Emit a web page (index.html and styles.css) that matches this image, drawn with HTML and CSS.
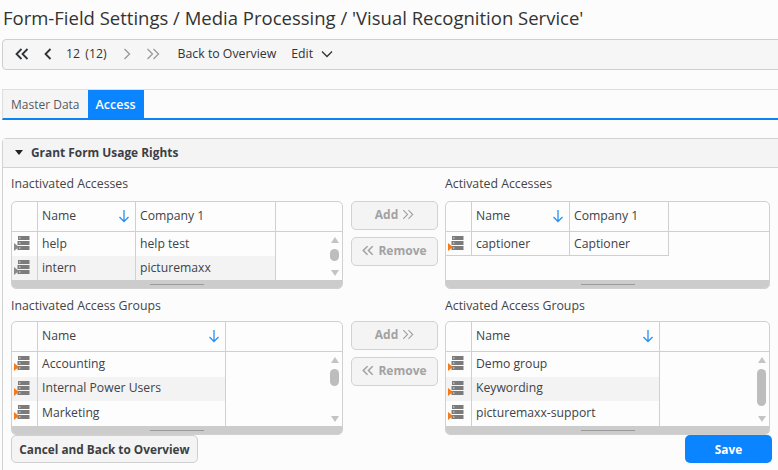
FILE: index.html
```html
<!DOCTYPE html>
<html lang="en">
<head>
<meta charset="utf-8">
<title>Form-Field Settings</title>
<link rel="stylesheet" href="styles.css">
</head>
<body>
<svg class="defs" width="0" height="0" aria-hidden="true">
  <symbol id="srv" viewBox="0 0 16 16">
    <path fill="#7b7b7b" d="M4 1h11.500v4H4zM3.500 6h12v4h-12zM3.500 11h12v4h-12z"/>
    <path fill="#e4e4e4" d="M5 2.500h1.500v1H5zM5 7.500h1.500v1H5zM5 12.500h1.500v1H5z"/>
  </symbol>
  <symbol id="dbl-l" viewBox="0 0 14 12"><path fill="none" stroke="currentColor" stroke-width="1.800" d="M6.500 1 1.500 6l5 5M12.500 1l-5 5 5 5"/></symbol>
  <symbol id="dbl-r" viewBox="0 0 14 12"><path fill="none" stroke="currentColor" stroke-width="1.300" d="M1.500 1l5 5-5 5M7.500 1l5 5-5 5"/></symbol>
  <symbol id="arrow" viewBox="0 0 12 14"><path fill="none" stroke="#2b8fee" stroke-width="1.300" d="M6 1v11.500M1.500 8 6 12.500 10.500 8"/></symbol>
</svg>

<h1 class="title">Form-Field Settings / Media Processing / 'Visual Recognition Service'</h1>

<nav class="toolbar">
  <svg class="nav-ico bold"><use href="#dbl-l"/></svg>
  <svg class="nav-ico single" viewBox="0 0 8 12"><path fill="none" stroke="currentColor" stroke-width="1.800" d="M6.500 1 1.500 6l5 5"/></svg>
  <span class="pager">12 (12)</span>
  <svg class="nav-ico single off" viewBox="0 0 8 12"><path fill="none" stroke="currentColor" stroke-width="1.400" d="M1.500 1l5 5-5 5"/></svg>
  <svg class="nav-ico off"><use href="#dbl-r"/></svg>
  <span class="link">Back to Overview</span>
  <span class="link edit">Edit</span>
  <svg class="caret" viewBox="0 0 12 8"><path fill="none" stroke="#333" stroke-width="1.300" d="M1 1.500l5 5 5-5"/></svg>
</nav>

<div class="tabs">
  <span class="tab">Master Data</span>
  <span class="tab active">Access</span>
</div>

<section class="panel">
  <header class="panel-head"><span class="tri"></span>Grant Form Usage Rights</header>
  <div class="panel-body">
    <div class="transfer">
      <div class="side">
        <div class="label">Inactivated Accesses</div>
        <div class="tbl small">
          <div class="row head c3"><span class="ic"></span><span class="cell">Name<svg class="sort"><use href="#arrow"/></svg></span><span class="cell">Company 1</span><span class="cell last"></span></div>
          <div class="row c3"><span class="ic"><svg class="srv"><use href="#srv"/></svg><i class="flag grey"></i></span><span class="cell">help</span><span class="cell">help test</span></div>
          <div class="row c3 alt"><span class="ic"><svg class="srv"><use href="#srv"/></svg><i class="flag grey"></i></span><span class="cell">intern</span><span class="cell">picturemaxx</span></div>
          <div class="vbar"><i class="up"></i><i class="thumb t-short"></i><i class="down"></i></div>
          <div class="foot"><i></i></div>
        </div>
      </div>
      <div class="mid">
        <button class="btn" type="button">Add <svg class="chev"><use href="#dbl-r"/></svg></button>
        <button class="btn" type="button"><svg class="chev"><use href="#dbl-l"/></svg> Remove</button>
      </div>
      <div class="side">
        <div class="label">Activated Accesses</div>
        <div class="tbl small">
          <div class="row head c3b"><span class="ic"></span><span class="cell">Name<svg class="sort"><use href="#arrow"/></svg></span><span class="cell">Company 1</span><span class="cell last"></span></div>
          <div class="row c3b single-row"><span class="ic"><svg class="srv"><use href="#srv"/></svg><i class="flag"></i></span><span class="cell">captioner</span><span class="cell">Captioner</span></div>
          <div class="foot"><i></i></div>
        </div>
      </div>

      <div class="side lower">
        <div class="label">Inactivated Access Groups</div>
        <div class="tbl big">
          <div class="row head c2"><span class="ic"></span><span class="cell">Name<svg class="sort"><use href="#arrow"/></svg></span><span class="cell last"></span></div>
          <div class="row c2"><span class="ic"><svg class="srv"><use href="#srv"/></svg><i class="flag"></i></span><span class="cell">Accounting</span></div>
          <div class="row c2 alt"><span class="ic"><svg class="srv"><use href="#srv"/></svg><i class="flag"></i></span><span class="cell">Internal Power Users</span></div>
          <div class="row c2"><span class="ic"><svg class="srv"><use href="#srv"/></svg><i class="flag"></i></span><span class="cell">Marketing</span></div>
          <div class="vbar"><i class="up"></i><i class="thumb t-short"></i><i class="down"></i></div>
          <div class="foot"><i></i></div>
        </div>
      </div>
      <div class="mid lower">
        <button class="btn" type="button">Add <svg class="chev"><use href="#dbl-r"/></svg></button>
        <button class="btn" type="button"><svg class="chev"><use href="#dbl-l"/></svg> Remove</button>
      </div>
      <div class="side lower">
        <div class="label">Activated Access Groups</div>
        <div class="tbl big">
          <div class="row head c2b"><span class="ic"></span><span class="cell">Name<svg class="sort"><use href="#arrow"/></svg></span><span class="cell last"></span></div>
          <div class="row c2b"><span class="ic"><svg class="srv"><use href="#srv"/></svg><i class="flag"></i></span><span class="cell">Demo group</span></div>
          <div class="row c2b alt"><span class="ic"><svg class="srv"><use href="#srv"/></svg><i class="flag"></i></span><span class="cell">Keywording</span></div>
          <div class="row c2b"><span class="ic"><svg class="srv"><use href="#srv"/></svg><i class="flag"></i></span><span class="cell">picturemaxx-support</span></div>
          <div class="vbar"><i class="up"></i><i class="thumb t-long"></i><i class="down"></i></div>
          <div class="foot"><i></i></div>
        </div>
      </div>
    </div>
    <div class="actions">
      <button class="cancel" type="button">Cancel and Back to Overview</button>
      <button class="save" type="button">Save</button>
    </div>
  </div>
</section>
</body>
</html>
```
FILE: styles.css
```css
* { box-sizing: border-box; }
html, body { margin: 0; height: 100%; overflow: hidden; }
body {
  width: 778px; height: 470px; background: #fcfcfc; color: #3a3d42;
  font-family: "Open Sans", "Noto Sans", sans-serif; font-size: 12.3px;
}
.defs { position: absolute; }
.title {
  margin: 0; padding: 5px 0 0 3px; height: 39px;
  font-size: 18.5px; font-weight: 400; line-height: 26px; color: #333; white-space: nowrap;
}
.toolbar {
  display: flex; align-items: center; height: 31px; margin-left: 2px; width: 800px;
  border: 1px solid #cfcfcf; border-radius: 4px; background: #f6f6f6; padding: 0 0 2px 12px; color: #333;
}
.nav-ico { width: 14px; height: 12px; color: #2f3338; flex: none; }
.nav-ico.single { width: 8px; margin-left: 15px; }
.nav-ico.off { color: #9a9a9a; margin-left: 0; }
.nav-ico.single.off { margin-right: 15px; }
.pager { margin: 0 16px 0 14px; word-spacing: 2px; }
.link { margin-left: 18px; }
.link.edit { margin-left: 15px; }
.caret { width: 12px; height: 8px; margin-left: 8px; }
.tabs {
  display: flex; height: 31px; margin: 19px 0 0 2px; width: 800px;
  border: 1px solid #dedede; border-bottom: 2px solid #0a84f5; border-right: 0;
}
.tab { display: flex; align-items: center; padding: 0 8px; background: #f5f5f5; color: #555a60; font-size: 12px; }
.tab.active { background: #0a84ff; color: #fff; font-weight: 600; font-size: 12.5px; }
.panel {
  margin: 18px 0 0 2px; width: 800px; height: 340px;
  border: 1px solid #d2d2d2; border-radius: 4px 0 0 0;
}
.panel-head {
  display: flex; align-items: center; height: 29px; padding: 0 0 2px 12px;
  background: #f4f4f4; border-bottom: 1px solid #d2d2d2; font-weight: 700; color: #3c3f44; font-size: 11.9px;
}
.tri { width: 0; height: 0; margin-right: 8px; border: 4.5px solid transparent; border-top: 5px solid #222; border-bottom: 0; }
.panel-body { padding: 0 0 0 8px; }
.transfer { display: grid; grid-template-columns: 332px 102px 325px; grid-template-rows: 122px 145px; }
.side { position: relative; padding-top: 7px; }
.label { height: 26px; line-height: 18px; font-size: 12.3px; color: #444; }
.side.lower .label { height: 24px; }
.tbl {
  position: relative; width: 100%; border: 1px solid #d0d0d0; border-radius: 5px;
  overflow: hidden; background: #fdfdfd; display: flex; flex-direction: column;
}
.tbl.small { height: 88px; }
.tbl.big { height: 114px; }
.row { display: grid; height: 24.5px; flex: none; }
.small .row { height: 24px; }
.row.head { height: 30px; border-bottom: 1px solid #d0d0d0; }
.c3 { grid-template-columns: 26px 98px 140px 1fr; }
.c3b { grid-template-columns: 26px 98px 99px 1fr; }
.c2 { grid-template-columns: 26px 188px 1fr; }
.c2b { grid-template-columns: 26px 188px 1fr; }
.row .ic, .row .cell { border-right: 1px solid #d0d0d0; }
.row .cell { display: flex; align-items: center; padding: 0 4px 2px; position: relative; white-space: nowrap; color: #404348; font-size: 12.2px; }
.row.head .cell.last { border-right: 0; }
.row .ic { position: relative; }
.row.alt .ic, .row.alt .cell { background: #f3f3f3; }
.single-row .ic, .single-row .cell { border-bottom: 1px solid #d0d0d0; padding-bottom: 1px; }
.srv { position: absolute; left: 2px; top: 3px; width: 16px; height: 16px; }
.flag {
  position: absolute; left: 2px; top: 11px; width: 0; height: 0;
  border-left: 5px solid #f47b1a; border-top: 4px solid transparent; border-bottom: 4px solid transparent;
}
.flag.grey { border-left-color: #8a8a8a; }
.sort { position: absolute; right: 5px; top: 7px; width: 12px; height: 14px; }
.foot {
  margin-top: auto; height: 8px; background: #cccccc; flex: none; display: flex; justify-content: center; align-items: center;
}
.foot i { width: 54px; height: 1px; background: #9a9a9a; }
.vbar {
  position: absolute; right: 0; top: 30px; bottom: 8px; width: 15px; background: #fdfdfd;
  display: flex; flex-direction: column; align-items: center;
}
.up, .down { width: 0; height: 0; border: 4.5px solid transparent; flex: none; }
.up { border-bottom: 6px solid #c4c4c4; border-top: 0; margin-top: 5px; }
.down { border-top: 6px solid #c4c4c4; border-bottom: 0; margin-top: auto; margin-bottom: 4px; }
.thumb { width: 9px; border-radius: 5px; background: #bdbdbd; margin-top: 6px; flex: none; }
.t-short { height: 12px; }
.big .t-short { height: 17px; }
.t-long { height: 37px; }
.mid { padding: 33px 0 0 8px; display: flex; flex-direction: column; gap: 7px; }
.mid.lower { padding-top: 31px; }
.btn {
  width: 87px; height: 29px; padding: 0 0 2px; border: 1px solid #d2d2d2; border-radius: 5px; background: #f4f4f4;
  color: #a2a2a2; font: 700 12px "Open Sans", "Noto Sans", sans-serif;
  display: flex; align-items: center; justify-content: center; gap: 4px;
}
.chev { width: 12px; height: 11px; }
.actions { display: flex; justify-content: space-between; width: 761px; }
.cancel, .save { height: 28px; border-radius: 5px; font: 700 11.8px "Open Sans", "Noto Sans", sans-serif; padding: 0 0 1px; }
.cancel { width: 187px; border: 1px solid #cfcfcf; background: #f4f4f4; color: #3c3f44; }
.save { width: 87px; border: 0; background: #0a84ff; color: #fff; }
```
